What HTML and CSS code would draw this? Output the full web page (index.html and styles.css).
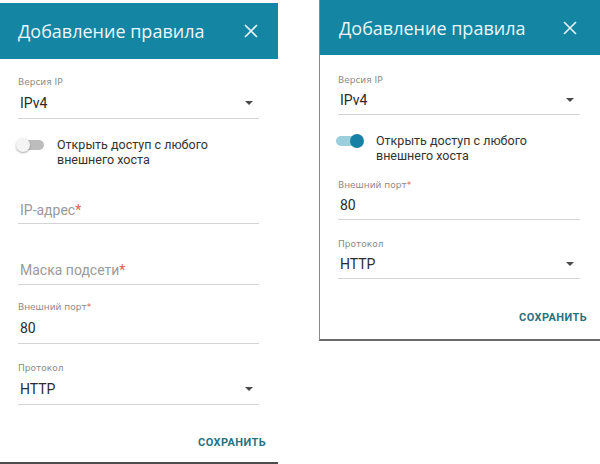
FILE: index.html
```html
<!DOCTYPE html>
<html lang="ru">
<head>
<meta charset="utf-8">
<title>Добавление правила</title>
<link rel="stylesheet" href="styles.css">
</head>
<body>
<div class="page">
  <section class="dialog dialog-left">
    <header class="dlg-head">
      <span class="dlg-title">Добавление правила</span>
      <svg class="close" viewBox="0 0 14 14" width="14" height="14"><path d="M1 1L13 13M13 1L1 13" stroke="#e6f4f8" stroke-width="1.6" fill="none"/></svg>
    </header>
    <div class="dlg-body">
      <div class="field f-ipver">
        <div class="label">Версия IP</div>
        <div class="value">IPv4<span class="caret"></span></div>
      </div>
      <div class="switch-row">
        <span class="switch off"><span class="knob"></span></span>
        <span class="switch-text"><span class="line">Открыть доступ с любого</span><span class="line">внешнего хоста</span></span>
      </div>
      <div class="field f-ip">
        <div class="value placeholder">IP-адрес<span class="req">*</span></div>
      </div>
      <div class="field f-mask">
        <div class="value placeholder">Маска подсети<span class="req">*</span></div>
      </div>
      <div class="field f-port">
        <div class="label">Внешний порт<span class="req">*</span></div>
        <div class="value">80</div>
      </div>
      <div class="field f-proto">
        <div class="label">Протокол</div>
        <div class="value">HTTP<span class="caret"></span></div>
      </div>
    </div>
    <footer class="dlg-foot"><span class="save">СОХРАНИТЬ</span></footer>
  </section>

  <section class="dialog dialog-right">
    <header class="dlg-head">
      <span class="dlg-title">Добавление правила</span>
      <svg class="close" viewBox="0 0 14 14" width="14" height="14"><path d="M1 1L13 13M13 1L1 13" stroke="#e6f4f8" stroke-width="1.6" fill="none"/></svg>
    </header>
    <div class="dlg-body">
      <div class="field f-ipver">
        <div class="label">Версия IP</div>
        <div class="value">IPv4<span class="caret"></span></div>
      </div>
      <div class="switch-row">
        <span class="switch on"><span class="knob"></span></span>
        <span class="switch-text"><span class="line">Открыть доступ с любого</span><span class="line">внешнего хоста</span></span>
      </div>
      <div class="field f-port">
        <div class="label">Внешний порт<span class="req">*</span></div>
        <div class="value">80</div>
      </div>
      <div class="field f-proto">
        <div class="label">Протокол</div>
        <div class="value">HTTP<span class="caret"></span></div>
      </div>
    </div>
    <footer class="dlg-foot"><span class="save">СОХРАНИТЬ</span></footer>
  </section>
</div>
</body>
</html>
```

FILE: styles.css
```css
html, body {
  margin: 0;
  padding: 0;
  background: #ffffff;
}

.page {
  display: flex;
  align-items: flex-start;
  width: 600px;
  height: 464px;
  overflow: hidden;
}

.dialog {
  display: flex;
  flex-direction: column;
  background: #ffffff;
}

.dialog-left {
  width: 278px;
  margin-top: 3px;
  border-bottom: 3px solid #4d4d4d;
}

.dialog-right {
  flex: 1;
  margin-left: 41px;
  border-left: 1px solid #8a8a8a;
  border-bottom: 2px solid #6a6a6a;
}

.dlg-head {
  display: flex;
  align-items: center;
  justify-content: space-between;
  background: #1585a4;
  padding-left: 18px;
  padding-right: 20px;
}

.dialog-left .dlg-head { height: 56px; }
.dialog-right .dlg-head { height: 55px; padding-left: 19px; padding-right: 23px; }

.dlg-title {
  font-family: "Open Sans", "DejaVu Sans", sans-serif;
  font-size: 18px;
  color: #eaf6f9;
}

.close { display: block; }

.dlg-body {
  display: flex;
  flex-direction: column;
  padding: 0 19px 0 18px;
}

.dialog-right .dlg-body { padding: 0 20px 0 18px; }

.field {
  display: flex;
  flex-direction: column;
}

.label {
  font-family: "DejaVu Sans", sans-serif;
  font-size: 9px;
  line-height: 12px;
  color: #8a8a8a;
}

.value {
  display: flex;
  align-items: center;
  justify-content: space-between;
  font-family: Roboto, "Liberation Sans", sans-serif;
  font-size: 14px;
  color: #2b2b2b;
  border-bottom: 1px solid #d4d4d4;
  padding-left: 2px;
  padding-right: 6px;
  height: 30px;
}

.value.placeholder {
  justify-content: flex-start;
  color: #9a9a9a;
}

.req { color: #e0604f; }

.caret {
  width: 0;
  height: 0;
  border-left: 4px solid transparent;
  border-right: 4px solid transparent;
  border-top: 4px solid #4a4a4a;
}

.switch-row {
  display: flex;
  align-items: flex-start;
  gap: 13px;
}

.switch {
  position: relative;
  flex: none;
  width: 28px;
  height: 14px;
  margin-left: -2px;
  margin-top: 1px;
}

.switch::before {
  content: "";
  position: absolute;
  left: 2px;
  right: 0;
  top: 2px;
  height: 10px;
  border-radius: 5px;
  background: #bdbdbd;
}

.switch .knob {
  position: absolute;
  top: 0;
  left: 0;
  width: 14px;
  height: 14px;
  border-radius: 50%;
  background: #f4f4f4;
  box-shadow: 0 1px 2px rgba(0,0,0,0.35);
}

.switch.on::before { background: #9bcfdc; left: 0; right: 2px; }
.switch.on .knob { left: 14px; background: #1681a4; box-shadow: none; }

.switch-text {
  display: flex;
  flex-direction: column;
  font-family: Roboto, "Liberation Sans", sans-serif;
  font-size: 12.5px;
  line-height: 15px;
  color: #333333;
}

.switch-text .line { display: block; }

.dlg-foot {
  display: flex;
  justify-content: flex-end;
  padding-right: 12px;
}

.save {
  font-family: Roboto, "Liberation Sans", sans-serif;
  font-weight: 700;
  font-size: 11px;
  line-height: 20px;
  letter-spacing: 0.4px;
  color: #2a7282;
}

/* left dialog vertical rhythm */
.dialog-left .f-ipver { margin-top: 17px; }
.dialog-left .switch-row { margin-top: 18px; }
.dialog-left .f-ip { margin-top: 30px; }
.dialog-left .f-ip .value { height: 26px; }
.dialog-left .f-mask { margin-top: 32px; }
.dialog-left .f-mask .value { height: 28px; }
.dialog-left .f-port { margin-top: 16px; }
.dialog-left .f-proto { margin-top: 18px; }
.dialog-left .dlg-foot { margin-top: 28px; padding-bottom: 9px; }

/* right dialog vertical rhythm */
.dialog-right .value { height: 28px; }
.dialog-right .f-ipver { margin-top: 19px; }
.dialog-right .switch-row { margin-top: 18px; gap: 12px; }
.dialog-right .f-port { margin-top: 16px; }
.dialog-right .f-proto { margin-top: 18px; }
.dialog-right .dlg-foot { margin-top: 29px; padding-bottom: 11px; padding-right: 13px; }
```
